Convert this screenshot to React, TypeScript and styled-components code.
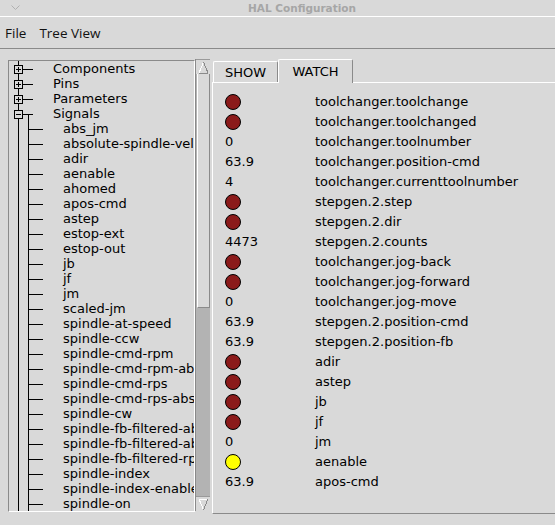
import React from "react";
import styled, { createGlobalStyle } from "styled-components";

const GlobalStyle = createGlobalStyle`
  html, body { margin: 0; padding: 0; background: #d9d9d9; }
  body { width: 555px; height: 525px; overflow: hidden; }
`;

const Window = styled.div`
  width: 555px;
  height: 525px;
  background: #d9d9d9;
  display: flex;
  flex-direction: column;
  overflow: hidden;
  font-family: "DejaVu Sans", sans-serif;
  color: #000;
`;

const TitleBar = styled.div`
  height: 16px;
  border-bottom: 1px solid #ffffff;
  display: flex;
  align-items: center;
  flex-shrink: 0;
`;

const Chevron = styled.svg`
  margin-left: 11px;
  flex-shrink: 0;
`;

const Title = styled.span`
  margin-left: 228px;
  font: bold 10.5px/14px "DejaVu Sans", sans-serif;
  color: #a6a6a6;
  white-space: nowrap;
`;

const MenuBar = styled.div`
  height: 31px;
  border-bottom: 1px solid #8a8a8a;
  display: flex;
  align-items: center;
  gap: 13px;
  padding-left: 5px;
  flex-shrink: 0;
`;

const MenuItem = styled.span`
  font: 13.5px/16px "Open Sans", sans-serif;
  color: #111;
`;

const Main = styled.div`
  flex: 1;
  display: flex;
  padding: 10px 0 0 8px;
  min-height: 0;
`;

const TreePane = styled.div`
  display: flex;
  align-items: flex-start;
  flex-shrink: 0;
`;

const ListBox = styled.div`
  width: 187px;
  height: 452px;
  margin-top: 1px;
  box-sizing: border-box;
  border-top: 1px solid #8a8a8a;
  border-left: 1px solid #8a8a8a;
  border-right: 1px solid #ffffff;
  border-bottom: 1px solid #ffffff;
  overflow: hidden;
`;

const TreeRow = styled.div`
  display: flex;
  align-items: center;
  height: 15px;
  white-space: nowrap;
`;

const Connector = styled.svg`
  flex-shrink: 0;
  display: block;
`;

const TreeLabel = styled.span<{ $depth: number }>`
  padding-left: ${(p) => (p.$depth ? 10 : 0)}px;
  font: 13px/15px "DejaVu Sans", sans-serif;
  color: #000;
`;

const ScrollBar = styled.div`
  width: 15px;
  height: 452px;
  box-sizing: border-box;
  border-left: 1px solid #8a8a8a;
  background: #b3b3b3;
  display: flex;
  flex-direction: column;
  flex-shrink: 0;
`;

const ArrowButton = styled.div`
  height: 14px;
  background: #d9d9d9;
  display: flex;
  align-items: center;
  justify-content: center;
  border-top: 1px solid #9a9a9a;
  flex-shrink: 0;
`;

const Slider = styled.div`
  height: 234px;
  box-sizing: border-box;
  background: #d9d9d9;
  border-left: 1px solid #ffffff;
  border-right: 1px solid #8a8a8a;
  border-bottom: 1px solid #8a8a8a;
  margin-left: 1px;
  flex-shrink: 0;
`;

const Trough = styled.div`
  flex: 1;
`;

const Notebook = styled.div`
  flex: 1;
  margin-left: 2px;
  display: flex;
  flex-direction: column;
  min-width: 0;
`;

const TabRow = styled.div`
  height: 23px;
  display: flex;
  align-items: flex-end;
  padding-left: 1px;
  flex-shrink: 0;
`;

const Tab = styled.div<{ $active?: boolean; $width: number }>`
  position: relative;
  z-index: 1;
  width: ${(p) => p.$width}px;
  height: ${(p) => (p.$active ? 24 : 21)}px;
  margin-bottom: ${(p) => (p.$active ? -1 : 0)}px;
  box-sizing: border-box;
  background: #d9d9d9;
  border-top: 1px solid #ffffff;
  border-left: 1px solid #ffffff;
  border-right: 1px solid #8a8a8a;
  border-radius: 2px 2px 0 0;
  display: flex;
  align-items: center;
  justify-content: center;
  padding-top: ${(p) => (p.$active ? 0 : 1)}px;
  font: 13px/15px "DejaVu Sans", sans-serif;
  color: #000;
`;

const Panel = styled.div`
  height: 432px;
  box-sizing: border-box;
  border-top: 1px solid #ffffff;
  border-left: 1px solid #ffffff;
  border-bottom: 1px solid #8a8a8a;
  padding: 9px 0 0 12px;
  display: flex;
  flex-direction: column;
`;

const WatchRow = styled.div`
  display: grid;
  grid-template-columns: 90px 1fr;
  height: 20px;
  align-items: center;
  white-space: nowrap;
  font: 13px/20px "DejaVu Sans", sans-serif;
  color: #000;
`;

const Led = styled.span<{ $color: string }>`
  display: block;
  width: 16px;
  height: 16px;
  box-sizing: border-box;
  border-radius: 50%;
  border: 1px solid #000;
  background: ${(p) => p.$color};
`;

type Kind = "collapsed" | "expanded" | "child";

function TreeConnector({ kind }: { kind: Kind }) {
  return (
    <Connector width={44} height={15} viewBox="0 0 44 15" shapeRendering="crispEdges">
      <line x1={9.5} y1={0} x2={9.5} y2={15} stroke="#000" />
      {kind === "child" ? (
        <>
          <line x1={19.5} y1={0} x2={19.5} y2={15} stroke="#000" />
          <line x1={19.5} y1={8.5} x2={34} y2={8.5} stroke="#000" />
        </>
      ) : (
        <>
          {kind === "expanded" && <line x1={19.5} y1={8.5} x2={19.5} y2={15} stroke="#000" />}
          <line x1={13.5} y1={8.5} x2={24} y2={8.5} stroke="#000" />
          <rect x={5.5} y={4.5} width={8} height={8} fill="#d9d9d9" stroke="#000" />
          <line x1={7} y1={8.5} x2={12} y2={8.5} stroke="#000" />
          {kind === "collapsed" && <line x1={9.5} y1={6} x2={9.5} y2={11} stroke="#000" />}
        </>
      )}
    </Connector>
  );
}

const topLevel: { label: string; kind: Kind }[] = [
  { label: "Components", kind: "collapsed" },
  { label: "Pins", kind: "collapsed" },
  { label: "Parameters", kind: "collapsed" },
  { label: "Signals", kind: "expanded" },
];

const signals = [
  "abs_jm",
  "absolute-spindle-vel",
  "adir",
  "aenable",
  "ahomed",
  "apos-cmd",
  "astep",
  "estop-ext",
  "estop-out",
  "jb",
  "jf",
  "jm",
  "scaled-jm",
  "spindle-at-speed",
  "spindle-ccw",
  "spindle-cmd-rpm",
  "spindle-cmd-rpm-abs",
  "spindle-cmd-rps",
  "spindle-cmd-rps-abs",
  "spindle-cw",
  "spindle-fb-filtered-abs-rpm",
  "spindle-fb-filtered-abs-rps",
  "spindle-fb-filtered-rps",
  "spindle-index",
  "spindle-index-enable",
  "spindle-on",
];

const RED = "#8b1a1a";
const YELLOW = "#ffff00";

type Watch = { name: string; led?: string; value?: string };

const watches: Watch[] = [
  { name: "toolchanger.toolchange", led: RED },
  { name: "toolchanger.toolchanged", led: RED },
  { name: "toolchanger.toolnumber", value: "0" },
  { name: "toolchanger.position-cmd", value: "63.9" },
  { name: "toolchanger.currenttoolnumber", value: "4" },
  { name: "stepgen.2.step", led: RED },
  { name: "stepgen.2.dir", led: RED },
  { name: "stepgen.2.counts", value: "4473" },
  { name: "toolchanger.jog-back", led: RED },
  { name: "toolchanger.jog-forward", led: RED },
  { name: "toolchanger.jog-move", value: "0" },
  { name: "stepgen.2.position-cmd", value: "63.9" },
  { name: "stepgen.2.position-fb", value: "63.9" },
  { name: "adir", led: RED },
  { name: "astep", led: RED },
  { name: "jb", led: RED },
  { name: "jf", led: RED },
  { name: "jm", value: "0" },
  { name: "aenable", led: YELLOW },
  { name: "apos-cmd", value: "63.9" },
];

function UpArrow() {
  return (
    <svg width={13} height={13} viewBox="0 0 13 13" shapeRendering="crispEdges">
      <polygon points="2,12 6.5,1 11,12" fill="#d9d9d9" stroke="none" />
      <line x1={2} y1={12} x2={6.5} y2={1} stroke="#ffffff" />
      <line x1={6.5} y1={1} x2={11} y2={12} stroke="#8a8a8a" />
      <line x1={2} y1={12} x2={11} y2={12} stroke="#8a8a8a" />
    </svg>
  );
}

function DownArrow() {
  return (
    <svg width={13} height={13} viewBox="0 0 13 13" shapeRendering="crispEdges">
      <polygon points="2,1 6.5,12 11,1" fill="#d9d9d9" stroke="none" />
      <line x1={2} y1={1} x2={11} y2={1} stroke="#ffffff" />
      <line x1={2} y1={1} x2={6.5} y2={12} stroke="#ffffff" />
      <line x1={6.5} y1={12} x2={11} y2={1} stroke="#8a8a8a" />
    </svg>
  );
}

export default function App() {
  return (
    <>
      <GlobalStyle />
      <Window>
        <TitleBar>
          <Chevron width={9} height={6} viewBox="0 0 9 6">
            <polyline points="0.5,0.5 4.5,4.5 8.5,0.5" fill="none" stroke="#b0b0b0" strokeWidth={1} />
          </Chevron>
          <Title>HAL Configuration</Title>
        </TitleBar>
        <MenuBar>
          <MenuItem>File</MenuItem>
          <MenuItem>Tree View</MenuItem>
        </MenuBar>
        <Main>
          <TreePane>
            <ListBox>
              {topLevel.map((t) => (
                <TreeRow key={t.label}>
                  <TreeConnector kind={t.kind} />
                  <TreeLabel $depth={0}>{t.label}</TreeLabel>
                </TreeRow>
              ))}
              {signals.map((s) => (
                <TreeRow key={s}>
                  <TreeConnector kind="child" />
                  <TreeLabel $depth={1}>{s}</TreeLabel>
                </TreeRow>
              ))}
            </ListBox>
            <ScrollBar>
              <ArrowButton>
                <UpArrow />
              </ArrowButton>
              <Slider />
              <Trough />
              <ArrowButton>
                <DownArrow />
              </ArrowButton>
            </ScrollBar>
          </TreePane>
          <Notebook>
            <TabRow>
              <Tab $width={65}>SHOW</Tab>
              <Tab $width={75} $active>
                WATCH
              </Tab>
            </TabRow>
            <Panel>
              {watches.map((w) => (
                <WatchRow key={w.name}>
                  {w.led ? <Led $color={w.led} /> : <span>{w.value}</span>}
                  <span>{w.name}</span>
                </WatchRow>
              ))}
            </Panel>
          </Notebook>
        </Main>
      </Window>
    </>
  );
}
